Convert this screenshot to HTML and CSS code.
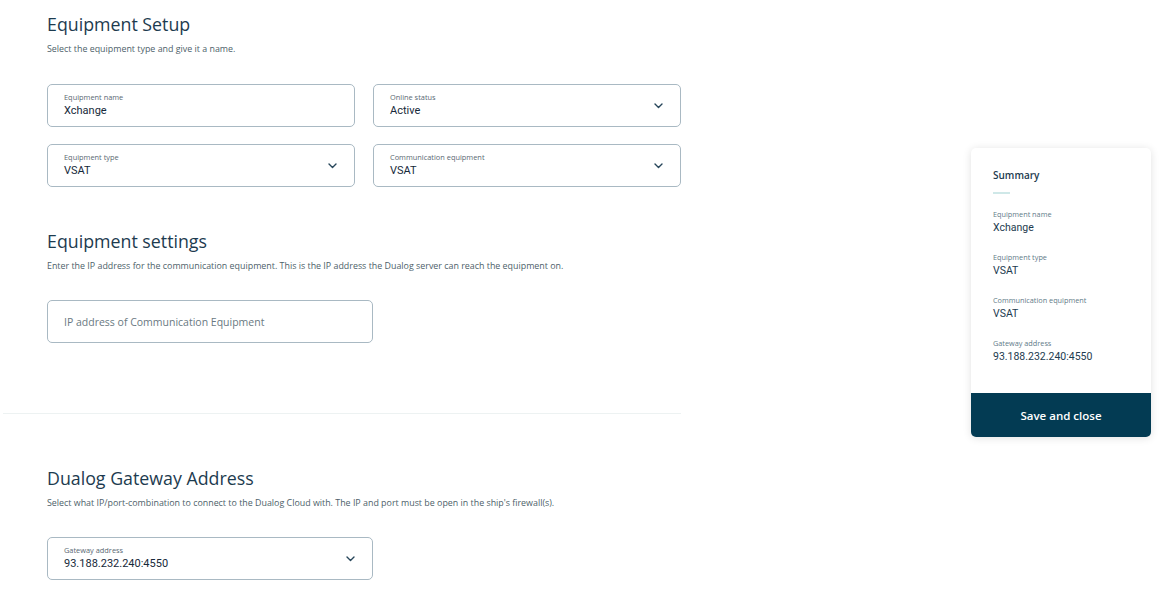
FILE: index.html
```html
<!DOCTYPE html>
<html lang="en">
<head>
<meta charset="utf-8">
<title>Equipment Setup</title>
<link rel="stylesheet" href="styles.css">
</head>
<body>
<div class="page">
  <main class="main">
    <section class="section s1">
      <h1 class="title">Equipment Setup</h1>
      <p class="desc">Select the equipment type and give it a name.</p>
      <div class="grid">
        <div class="field">
          <span class="label">Equipment name</span>
          <span class="value">Xchange</span>
        </div>
        <div class="field select">
          <span class="label">Online status</span>
          <span class="value">Active</span>
          <svg class="chev" viewBox="0 0 9 6" width="9" height="6"><path d="M1 1l3.5 3.5L8 1" fill="none" stroke="#27465a" stroke-width="1.4" stroke-linecap="round" stroke-linejoin="round"/></svg>
        </div>
        <div class="field select">
          <span class="label">Equipment type</span>
          <span class="value">VSAT</span>
          <svg class="chev" viewBox="0 0 9 6" width="9" height="6"><path d="M1 1l3.5 3.5L8 1" fill="none" stroke="#27465a" stroke-width="1.4" stroke-linecap="round" stroke-linejoin="round"/></svg>
        </div>
        <div class="field select">
          <span class="label">Communication equipment</span>
          <span class="value">VSAT</span>
          <svg class="chev" viewBox="0 0 9 6" width="9" height="6"><path d="M1 1l3.5 3.5L8 1" fill="none" stroke="#27465a" stroke-width="1.4" stroke-linecap="round" stroke-linejoin="round"/></svg>
        </div>
      </div>
    </section>

    <section class="section s2">
      <h2 class="title">Equipment settings</h2>
      <p class="desc">Enter the IP address for the communication equipment. This is the IP address the Dualog server can reach the equipment on.</p>
      <div class="field wide placeholder">
        <span class="ph">IP address of Communication Equipment</span>
      </div>
    </section>

    <hr class="divider">

    <section class="section s3">
      <h2 class="title">Dualog Gateway Address</h2>
      <p class="desc">Select what IP/port-combination to connect to the Dualog Cloud with. The IP and port must be open in the ship's firewall(s).</p>
      <div class="field wide select">
        <span class="label">Gateway address</span>
        <span class="value">93.188.232.240:4550</span>
        <svg class="chev" viewBox="0 0 9 6" width="9" height="6"><path d="M1 1l3.5 3.5L8 1" fill="none" stroke="#27465a" stroke-width="1.4" stroke-linecap="round" stroke-linejoin="round"/></svg>
      </div>
    </section>
  </main>

  <aside class="summary">
    <div class="summary-body">
      <div class="summary-title">Summary</div>
      <div class="summary-rule"></div>
      <div class="item first">
        <div class="item-label">Equipment name</div>
        <div class="item-value">Xchange</div>
      </div>
      <div class="item">
        <div class="item-label">Equipment type</div>
        <div class="item-value">VSAT</div>
      </div>
      <div class="item">
        <div class="item-label">Communication equipment</div>
        <div class="item-value">VSAT</div>
      </div>
      <div class="item">
        <div class="item-label">Gateway address</div>
        <div class="item-value">93.188.232.240:4550</div>
      </div>
    </div>
    <button class="save">Save and close</button>
  </aside>
</div>
</body>
</html>
```

FILE: styles.css
```css
* { box-sizing: border-box; }
html, body { margin: 0; padding: 0; background: #ffffff; }
body {
  font-family: "Open Sans", "Liberation Sans", sans-serif;
  color: #1d3b4f;
  width: 1163px;
  height: 591px;
  overflow: hidden;
}
.page {
  display: flex;
  align-items: flex-start;
}
.main {
  margin-left: 3px;
  width: 678px;
}
.section {
  padding-left: 44px;
}
.s1 { padding-top: 12px; }
.s2 { padding-top: 42px; }
.s3 { padding-top: 52px; }
.title {
  margin: 0;
  font-family: "Open Sans", sans-serif;
  font-weight: 400;
  font-size: 17.8px;
  line-height: 24px;
  color: #1d3b4f;
  letter-spacing: 0;
}
.desc {
  margin: 7px 0 0;
  font-size: 8.9px;
  line-height: 12px;
  color: #4e5f6a;
}
.grid {
  margin-top: 29px;
  display: grid;
  grid-template-columns: 308px 308px;
  grid-auto-rows: 43px;
  column-gap: 18px;
  row-gap: 17px;
}
.field {
  position: relative;
  height: 43px;
  border: 1px solid #a9b9c3;
  border-radius: 5px;
  padding: 7px 16px 0;
  display: flex;
  flex-direction: column;
  background: #fff;
}
.field.wide {
  width: 326px;
  margin-top: 28px;
}
.label {
  font-size: 7.4px;
  line-height: 10px;
  color: #5a6973;
}
.value {
  margin-top: 2px;
  font-family: Roboto, "Liberation Sans", sans-serif;
  font-size: 11px;
  line-height: 14px;
  color: #16293a;
}
.chev {
  position: absolute;
  right: 17px;
  top: 18px;
}
.placeholder {
  justify-content: center;
  padding-top: 0;
}
.ph {
  font-size: 10.5px;
  color: #6a7982;
}
.divider {
  margin: 70px 0 0;
  border: 0;
  height: 1px;
  background: #edf2f2;
}
.summary {
  margin-left: auto;
  margin-right: 12px;
  margin-top: 148px;
  width: 180px;
  background: #fff;
  border-radius: 5px;
  box-shadow: 0 1px 8px rgba(0, 0, 0, 0.12);
  overflow: hidden;
}
.summary-body {
  padding: 20px 22px 29px;
}
.summary-title {
  font-size: 10px;
  line-height: 14px;
  font-weight: 600;
  color: #1d3b4f;
}
.summary-rule {
  margin-top: 10px;
  width: 17px;
  height: 2px;
  background: #cfe8e8;
}
.item { margin-top: 17px; }
.item.first { margin-top: 15px; }
.item-label {
  font-size: 7.3px;
  line-height: 10px;
  color: #5f7b88;
}
.item-value {
  margin-top: 2px;
  font-family: Roboto, "Liberation Sans", sans-serif;
  font-size: 10.5px;
  line-height: 14px;
  color: #1d3b4f;
}
.save {
  display: block;
  width: 100%;
  height: 44px;
  border: 0;
  background: #033b53;
  color: #ffffff;
  font-family: "Open Sans", sans-serif;
  font-weight: 600;
  font-size: 11.5px;
  cursor: pointer;
}
```
